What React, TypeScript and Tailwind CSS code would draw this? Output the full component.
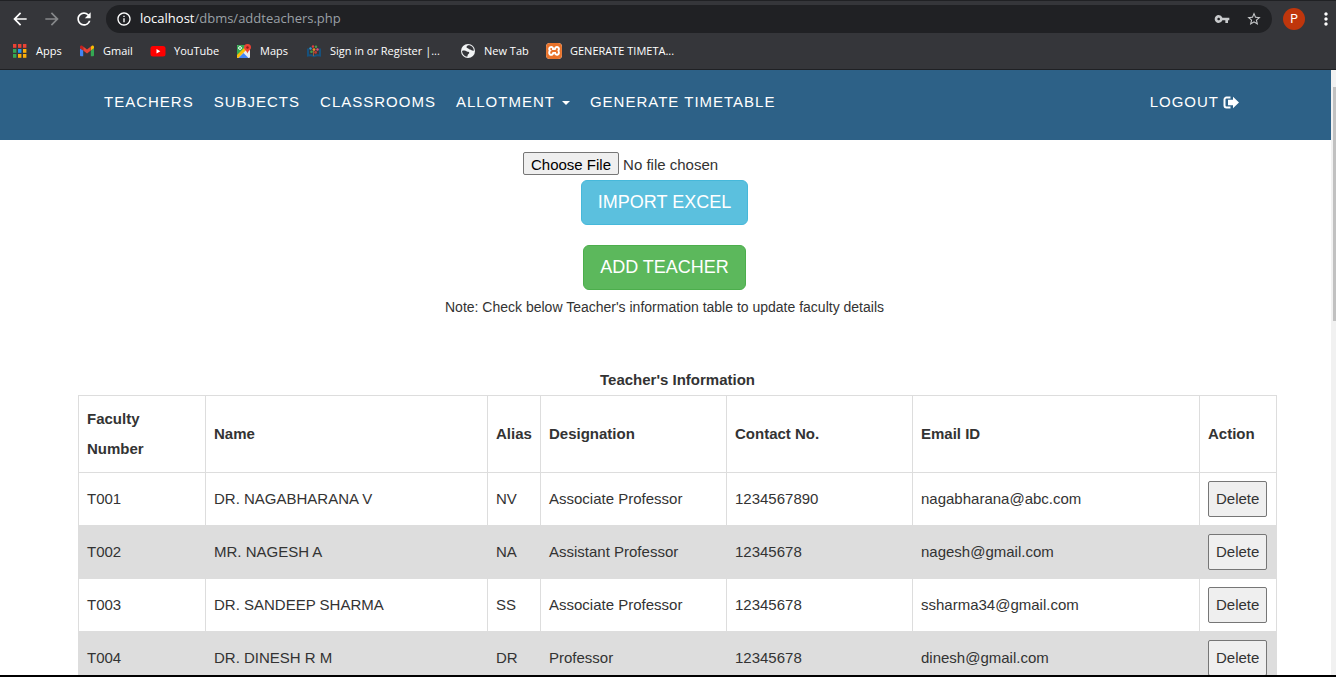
import { MdArrowBack, MdArrowForward, MdRefresh, MdInfoOutline, MdVpnKey, MdStarBorder, MdMoreVert } from "react-icons/md";
import { SiXampp } from "react-icons/si";

function AppsIcon() {
  const colors = ["#ea4335", "#ea4335", "#ea4335", "#34a853", "#2196f3", "#fbaf0b", "#34a853", "#fbaf0b", "#fbaf0b"];
  return (
    <svg width="16" height="14" viewBox="0 0 16 14" aria-hidden="true">
      {colors.map((c, i) => (
        <rect key={i} x={1 + (i % 3) * 5} y={Math.floor(i / 3) * 5} width="3.4" height="3.8" fill={c} />
      ))}
    </svg>
  );
}

function GmailIcon() {
  return (
    <svg width="16" height="14" viewBox="-1 0 16 14" aria-hidden="true">
      <path fill="#4285f4" d="M1 12.2h2.2V6.6L0 4.2v7a1 1 0 0 0 1 1z" />
      <path fill="#34a853" d="M10.8 12.2H13a1 1 0 0 0 1-1v-7l-3.2 2.4z" />
      <path fill="#fbbc04" d="M10.8 2.8v3.8L14 4.2V2.9c0-1.2-1.3-1.8-2.2-1.1z" />
      <path fill="#ea4335" d="M3.2 6.6V2.6L7 5.4l3.8-2.8v4L7 9.5z" />
      <path fill="#c5221f" d="M0 2.9v1.3l3.2 2.4V2.6l-1-.8C1.3 1.1 0 1.7 0 2.9z" />
    </svg>
  );
}

function YouTubeIcon() {
  return (
    <svg width="16" height="14" viewBox="0 0 16 14" aria-hidden="true">
      <rect x="0.5" y="2" width="15" height="10.5" rx="2.5" fill="#f00" />
      <path d="M6.5 5v4.400L10.3 7.2z" fill="#fff" />
    </svg>
  );
}

function MapsIcon() {
  return (
    <svg width="16" height="16" viewBox="0 0 16 16" aria-hidden="true">
      <rect x="1" y="2" width="13" height="13" rx="1" fill="#e8eaed" />
      <path d="M1 3a1 1 0 0 1 1-1h8v2L1 13z" fill="#34a853" />
      <path d="M1 12l9-9 1.500 2.500L2.500 15H2a1 1 0 0 1-1-1z" fill="#fbbc04" />
      <path d="M2.500 15l5-5 5 5z" fill="#4285f4" />
      <circle cx="4" cy="5" r="1.4" fill="none" stroke="#fff" strokeWidth="1" />
      <path d="M11.5 1A3.4 3.4 0 0 0 8 4.5c0 2.300 2.700 3 3.500 6 .8-3 3.500-3.700 3.500-6A3.400 3.400 0 0 0 11.500 1z" fill="#ea4335" />
      <circle cx="11.5" cy="4.5" r="1.2" fill="#8c1d18" />
    </svg>
  );
}

function CampusIcon() {
  return (
    <svg width="16" height="14" viewBox="0 0 16 14" aria-hidden="true">
      <path d="M2 4.500v7c2.500-.6 4.500-.3 6 .8 1.500-1.100 3.500-1.400 6-.8v-7" fill="none" stroke="#16517d" strokeWidth="2" />
      <circle cx="4.5" cy="4.5" r="1.2" fill="#2e9bd6" />
      <circle cx="7" cy="2.5" r="1.2" fill="#e5393f" />
      <circle cx="10" cy="2.8" r="1.2" fill="#46a049" />
      <circle cx="11.5" cy="5.5" r="1.2" fill="#e04f80" />
      <circle cx="8" cy="5.6" r="1.4" fill="#f08a24" />
      <circle cx="5.5" cy="7.8" r="1.3" fill="#46a049" />
      <circle cx="9.6" cy="8.4" r="1.4" fill="#c43a31" />
      <path d="M7.5 7v5" stroke="#9a5b3a" />
    </svg>
  );
}

function GlobeIcon() {
  return (
    <svg width="16" height="16" viewBox="0 0 16 16" aria-hidden="true">
      <circle cx="8" cy="8" r="7" fill="#f1f3f4" />
      <path d="M2 8c1.500-.6 3.500-.6 4.500.2S9 8.500 9.300 9.700c.2 1-1.200 1.200-1.600 2.200L7.300 13.800C4.500 13.300 2.200 11.500 2 8z" fill="#35363a" />
      <path d="M8 2.3C6.500 3 5.800 4.500 7.300 5s1.300 1.300 2.700 1.500 1.700 1.500 3.800 1.200C13.800 4.500 11.500 2 8 2.300z" fill="#35363a" />
    </svg>
  );
}

function LogoutIcon() {
  return (
    <svg width="16" height="13" viewBox="0 0 16 13" fill="none" aria-hidden="true">
      <path d="M7.500 1.500H3.500a2 2 0 0 0-2 2v6a2 2 0 0 0 2 2h4" stroke="#fff" strokeWidth="2" />
      <path d="M10 .8l6 5.700-6 5.700V9.300H5V3.700h5z" fill="#fff" />
    </svg>
  );
}

const bookmarks = [
  { label: "Apps", icon: <AppsIcon />, box: "w-[67px]" },
  { label: "Gmail", icon: <GmailIcon />, box: "w-[71px]" },
  { label: "YouTube", icon: <YouTubeIcon />, box: "w-[86px]" },
  { label: "Maps", icon: <MapsIcon />, box: "w-[70px]" },
  { label: "Sign in or Register |...", icon: <CampusIcon />, box: "w-[154px]" },
  { label: "New Tab", icon: <GlobeIcon />, box: "w-[86px]" },
  {
    label: "GENERATE TIMETA...",
    icon: <SiXampp size={16} className="rounded-sm bg-white text-[#e8722a]" />,
    box: "w-40",
  },
];

function BrowserBar() {
  return (
    <header className="shrink-0 border-y border-[#202124] bg-[#35363a] font-['Open_Sans','Noto_Sans',sans-serif] text-white">
      <div className="flex h-9 items-center">
        <div className="flex items-center gap-3 pr-3 pl-2.5">
          <button aria-label="Back"><MdArrowBack size={20} /></button>
          <button aria-label="Forward" className="text-[#86888a]"><MdArrowForward size={20} /></button>
          <button aria-label="Reload"><MdRefresh size={20} /></button>
        </div>
        <div className="flex h-7 flex-1 items-center rounded-full bg-[#202124] px-2.5 text-[13px]">
          <MdInfoOutline size={16} className="mr-2 shrink-0" />
          <p className="flex-1 text-[#9aa0a6]">
            <span className="text-white">localhost</span>/dbms/addteachers.php
          </p>
          <button aria-label="Saved passwords" className="mr-4 text-[#c8cacc]"><MdVpnKey size={16} /></button>
          <button aria-label="Bookmark this page" className="text-[#c8cacc]"><MdStarBorder size={16} /></button>
        </div>
        <button aria-label="Profile" className="mx-[11px] size-[22px] rounded-full bg-[#bf360c] font-[Roboto,sans-serif] text-xs">P</button>
        <button aria-label="Menu"><MdMoreVert size={20} /></button>
      </div>
      <nav aria-label="Bookmarks" className="flex h-8 items-center pb-1 pl-3 text-[11px]">
        {bookmarks.map((b) => (
          <a key={b.label} href="#" className={`flex shrink-0 items-center gap-2 whitespace-nowrap ${b.box}`}>
            {b.icon}
            {b.label}
          </a>
        ))}
      </nav>
    </header>
  );
}

const teachers = [
  ["T001", "DR. NAGABHARANA V", "NV", "Associate Professor", "1234567890", "nagabharana@abc.com"],
  ["T002", "MR. NAGESH A", "NA", "Assistant Professor", "12345678", "nagesh@gmail.com"],
  ["T003", "DR. SANDEEP SHARMA", "SS", "Associate Professor", "12345678", "ssharma34@gmail.com"],
  ["T004", "DR. DINESH R M", "DR", "Professor", "12345678", "dinesh@gmail.com"],
];

const headings = ["Faculty Number", "Name", "Alias", "Designation", "Contact No.", "Email ID", "Action"];

function SiteNav() {
  return (
    <nav className="flex h-[70px] items-start justify-between bg-[#2d6187] pt-5 pr-[92px] pl-[104px] text-[15px] leading-6 tracking-[1px] text-white">
      <div className="flex gap-5">
        <a href="#">TEACHERS</a>
        <a href="#">SUBJECTS</a>
        <a href="#">CLASSROOMS</a>
        <a href="#" className="flex items-center gap-[7px]">
          ALLOTMENT
          <svg width="8" height="4" viewBox="0 0 8 4" className="mt-0.5" aria-hidden="true">
            <path d="M0 0h8L4 4z" fill="#fff" />
          </svg>
        </a>
        <a href="#">GENERATE TIMETABLE</a>
      </div>
      <a href="#" className="flex items-center gap-1">
        LOGOUT
        <LogoutIcon />
      </a>
    </nav>
  );
}

export default function App() {
  return (
    <div className="flex h-screen flex-col overflow-hidden border-b-2 border-black bg-white font-['Liberation_Sans',Arial,sans-serif] text-[15px] text-[#333]">
      <BrowserBar />
      <div className="flex min-h-0 flex-1">
        <div className="min-w-0 flex-1 overflow-hidden">
          <SiteNav />
          <main>
            <form className="flex flex-col items-center pt-3 pr-0.5">
              <input
                type="file"
                aria-label="Choose Excel file"
                className="h-6 w-[283px] text-[15px] leading-6 file:mr-1 file:h-[23px] file:rounded-xs file:border file:border-solid file:border-[#767676] file:bg-[#efefef] file:px-[7px] file:text-[15px] file:text-black"
              />
              <button type="button" className="mt-1 h-[45px] rounded-md border border-[#46b8da] bg-[#5bc0de] px-4 pb-0.5 text-lg text-white">
                IMPORT EXCEL
              </button>
              <button type="button" className="mt-5 h-[45px] rounded-md border border-[#4cae4c] bg-[#5cb85c] px-4 pb-0.5 text-lg text-white">
                ADD TEACHER
              </button>
              <p className="mt-[7px] text-sm">Note: Check below Teacher's information table to update faculty details</p>
            </form>
            <div className="mt-12 pr-[54px] pl-[78px]">
              <table className="w-full table-fixed border-collapse leading-[30px]">
                <caption className="font-bold">Teacher's Information</caption>
                <colgroup>
                  <col className="w-[127px]" />
                  <col />
                  <col className="w-[53px]" />
                  <col className="w-[186px]" />
                  <col className="w-[186px]" />
                  <col className="w-[287px]" />
                  <col className="w-[77px]" />
                </colgroup>
                <thead>
                  <tr>
                    {headings.map((h) => (
                      <th key={h} scope="col" className="border border-[#ddd] p-2 text-left">{h}</th>
                    ))}
                  </tr>
                </thead>
                <tbody>
                  {teachers.map((row) => (
                    <tr key={row[0]} className="even:bg-[#ddd]">
                      {row.map((cell, i) => (
                        <td key={i} className="border border-[#ddd] p-2">{cell}</td>
                      ))}
                      <td className="border border-[#ddd] p-2">
                        <button type="button" className="block h-9 rounded-xs border border-[#767676] bg-[#efefef] px-[7px]">Delete</button>
                      </td>
                    </tr>
                  ))}
                </tbody>
              </table>
            </div>
          </main>
        </div>
        <div className="w-[5px] bg-[#f1f1f1] pt-[17px] pl-0.5" aria-hidden="true">
          <div className="h-[234px] bg-[#c1c1c1]" />
        </div>
      </div>
    </div>
  );
}
